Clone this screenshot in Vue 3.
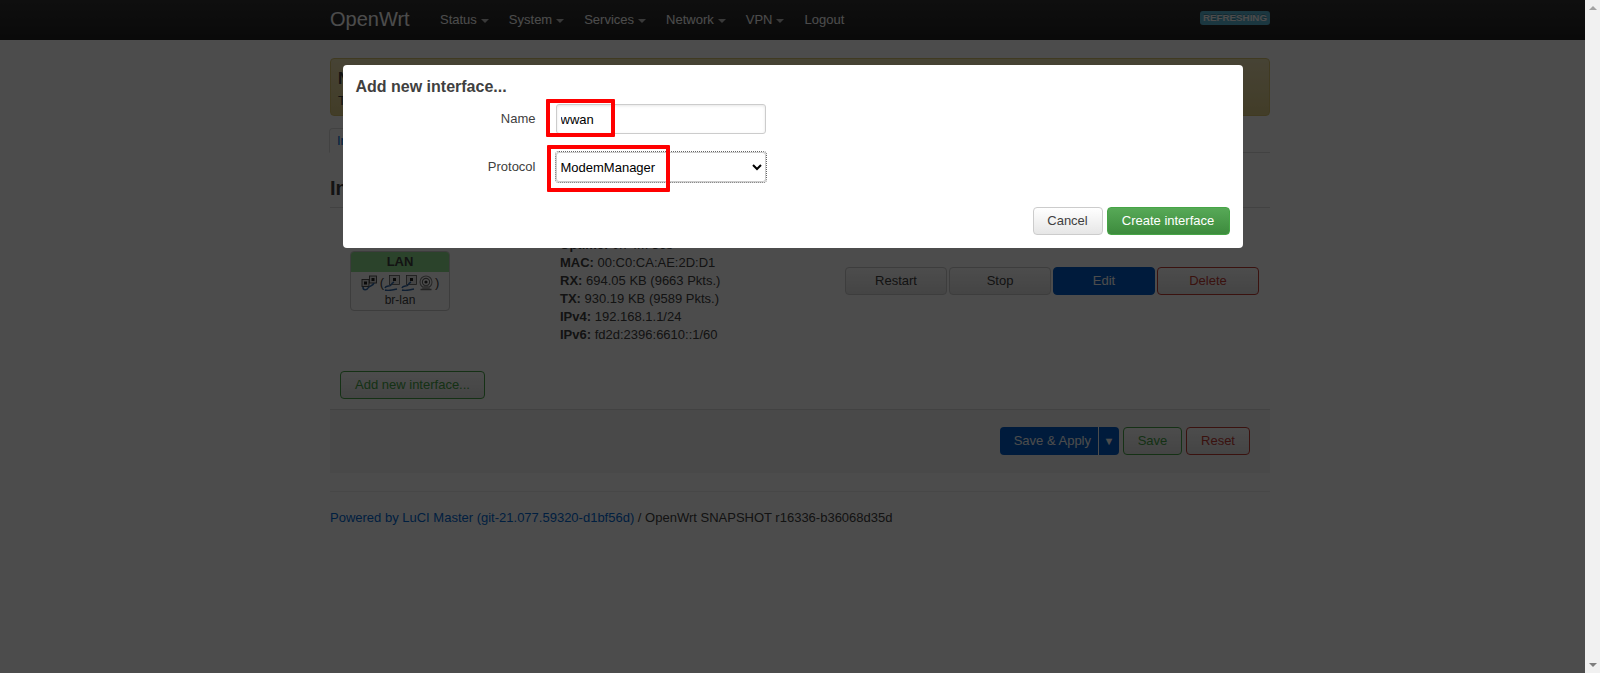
<script setup>
const navItems = [
  { label: 'Status', caret: true },
  { label: 'System', caret: true },
  { label: 'Services', caret: true },
  { label: 'Network', caret: true },
  { label: 'VPN', caret: true },
  { label: 'Logout', caret: false }
]
const stats = [
  { key: 'Uptime:', value: '0h 4m 36s' },
  { key: 'MAC:', value: '00:C0:CA:AE:2D:D1' },
  { key: 'RX:', value: '694.05 KB (9663 Pkts.)' },
  { key: 'TX:', value: '930.19 KB (9589 Pkts.)' },
  { key: 'IPv4:', value: '192.168.1.1/24' },
  { key: 'IPv6:', value: 'fd2d:2396:6610::1/60' }
]
</script>

<template>
  <div class="shell">
    <div class="page">
      <header class="topbar">
        <div class="topbar-inner">
          <a class="brand">OpenWrt</a>
          <nav class="nav">
            <a v-for="item in navItems" :key="item.label" class="nav-link">
              {{ item.label }}<span v-if="item.caret" class="caret"></span>
            </a>
          </nav>
          <span class="badge">REFRESHING</span>
        </div>
      </header>

      <main class="container">
        <div class="alert">
          <strong>No password set!</strong>
          <p>There is no password set on this router.</p>
        </div>

        <ul class="tabs">
          <li class="tab">Interfaces</li>
        </ul>

        <h2 class="title">Interfaces</h2>

        <section class="iface-row">
          <div class="iface-box">
            <div class="iface-head">LAN</div>
            <div class="iface-icons">
              <svg class="ico" viewBox="0 0 16 16">
                <rect x="1" y="4.5" width="7" height="7" fill="#ddd" stroke="#444" stroke-width=".9" />
                <rect x="8.5" y="1" width="7" height="7" fill="#ddd" stroke="#444" stroke-width=".9" />
                <rect x="3" y="6.5" width="3" height="3" fill="#222" />
                <rect x="10.5" y="3" width="3" height="3" fill="#222" />
                <path d="M2 12c0 4 4 3 5 1s5-2 6-5" fill="none" stroke="#2f67a8" stroke-width="1.6" />
              </svg>
              <span class="paren open">(</span>
              <svg v-for="n in 2" :key="n" class="ico port" viewBox="0 0 16 16">
                <rect x="5.5" y="0.5" width="10" height="9" fill="#e4e4e4" stroke="#555" stroke-width=".8" />
                <rect x="9" y="3" width="3" height="3" fill="#222" />
                <path d="M1 13c1-3 5-1 6-3s1-2 3-3M1 15c3 1 8 0 12-1" fill="none" stroke="#2f67a8" stroke-width="1.5" />
              </svg>
              <svg class="ico port" viewBox="0 0 16 16">
                <circle cx="8" cy="7" r="1.6" fill="#333" />
                <circle cx="8" cy="7" r="3.6" fill="none" stroke="#666" stroke-width="1.1" />
                <circle cx="8" cy="7" r="6" fill="none" stroke="#888" stroke-width="1.1" />
                <path d="M6 10.5h4l2 3.5H4z" fill="#aaa" />
                <path d="M2.5 14.5h11" stroke="#777" stroke-width="1.4" />
              </svg>
              <span class="paren">)</span>
            </div>
            <div class="iface-name">br-lan</div>
          </div>

          <div class="iface-stats">
            <div v-for="row in stats" :key="row.key"><strong>{{ row.key }}</strong> {{ row.value }}</div>
          </div>

          <div class="iface-actions">
            <button class="btn wide">Restart</button>
            <button class="btn wide">Stop</button>
            <button class="btn wide primary">Edit</button>
            <button class="btn wide danger">Delete</button>
          </div>
        </section>

        <div class="add-row">
          <button class="btn positive add">Add new interface...</button>
        </div>

        <div class="actions">
          <div class="split">
            <span class="split-main">Save &amp; Apply</span>
            <span class="split-arrow">▼</span>
          </div>
          <button class="btn positive save">Save</button>
          <button class="btn danger reset">Reset</button>
        </div>

        <footer class="footer">
          <a>Powered by LuCI Master (git-21.077.59320-d1bf56d)</a> / OpenWrt SNAPSHOT r16336-b36068d35d
        </footer>
      </main>

      <div class="overlay">
        <div class="modal">
          <h4 class="modal-title">Add new interface...</h4>
          <div class="field field-name">
            <label class="field-label">Name</label>
            <input class="input" value="wwan" />
          </div>
          <div class="field field-proto">
            <label class="field-label">Protocol</label>
            <select class="select">
              <option>ModemManager</option>
            </select>
          </div>
          <div class="modal-foot">
            <button class="btn cancel">Cancel</button>
            <button class="btn create">Create interface</button>
          </div>
          <span class="mark mark-name"></span>
          <span class="mark mark-proto"></span>
        </div>
      </div>
    </div>

    <aside class="scrollbar">
      <span class="arrow up"></span>
      <span class="arrow down"></span>
    </aside>
  </div>
</template>

<style>
html, body { margin: 0; overflow: hidden; }
</style>

<style scoped>
.shell {
  display: flex;
  width: 1600px;
  height: 673px;
  overflow: hidden;
  font-family: "Liberation Sans", Arial, sans-serif;
  font-size: 13px;
  line-height: 18px;
  color: #404040;
  background: #fff;
}
.page { position: relative; width: 1585px; height: 673px; overflow: hidden; flex: none; }
.scrollbar {
  width: 15px;
  flex: none;
  background: #f1f1f1;
  display: flex;
  flex-direction: column;
  justify-content: space-between;
  align-items: center;
  padding: 6px 0;
  box-sizing: border-box;
}
.arrow { width: 0; height: 0; border-left: 4px solid transparent; border-right: 4px solid transparent; }
.arrow.up { border-bottom: 4px solid #a3a3a3; }
.arrow.down { border-top: 4px solid #7f7f7f; }

.topbar {
  height: 40px;
  background: linear-gradient(#333, #222);
  box-sizing: border-box;
}
.topbar-inner { margin-left: 330px; width: 940px; height: 40px; display: flex; align-items: center; }
.brand { font-size: 20px; color: #fff; width: 100px; flex: none; margin-top: -2px; }
.nav { display: flex; flex: 1; margin-left: 10px; }
.nav-link { color: #fff; margin-right: 20px; white-space: nowrap; display: inline-flex; align-items: center; }
.caret {
  display: inline-block;
  margin-left: 4px;
  margin-top: 1px;
  border-left: 4px solid transparent;
  border-right: 4px solid transparent;
  border-top: 4px solid #fff;
  opacity: .7;
}
.badge {
  background: #5cb8d8;
  color: #fff;
  font-size: 9.75px;
  font-weight: 700;
  line-height: 14px;
  height: 14px;
  padding: 0 3px;
  border-radius: 3px;
  margin-top: -4px;
  text-shadow: 0 -1px 0 rgba(0,0,0,.25);
}

.container { margin-left: 330px; width: 940px; }
.alert {
  margin-top: 18px;
  height: 58px;
  box-sizing: border-box;
  background: linear-gradient(#ece0b0, #dccb85);
  border: 1px solid #d8c470;
  border-radius: 4px;
  padding: 11px 7px;
  color: #404040;
}
.alert strong { display: block; font-size: 16px; }
.alert p { margin: 4px 0 0; }
.tabs { list-style: none; margin: 12px 0 0; padding: 0; height: 24px; border-bottom: 1px solid #ddd; display: flex; }
.tab {
  color: #0069d6;
  margin-left: -1px;
  padding: 0 14px 0 7px;
  border: 1px solid #ddd;
  border-bottom: 1px solid #fff;
  border-radius: 4px 4px 0 0;
  line-height: 24px;
  height: 25px;
  box-sizing: border-box;
}
.title { margin: 18px 0 0; font-size: 20px; line-height: 34px; height: 36px; border-bottom: 1px solid #ddd; color: #404040; font-weight: 700; }
.iface-row { display: flex; height: 163px; }
.iface-box {
  margin: 43px 0 0 20px;
  width: 100px;
  height: 60px;
  box-sizing: border-box;
  border: 1px solid #ccc;
  border-radius: 4px;
  text-align: center;
  overflow: hidden;
  font-size: 12px;
  line-height: 16px;
}
.iface-head { background: #90e090; height: 20px; font-size: 13px; font-weight: 700; line-height: 20px; color: #404040; }
.iface-icons { display: flex; justify-content: center; align-items: center; height: 20px; margin-top: 1px; }
.ico { width: 16px; height: 16px; flex: none; }
.ico.port { margin-left: 1px; }
.paren { font-size: 13px; margin-left: 1px; }
.paren.open { margin: 0 -1px 0 3px; }
.iface-name { line-height: 13px; margin-top: 1px; }
.iface-stats { margin: 28px 0 0 110px; width: 285px; }
.iface-actions { display: flex; gap: 2px; margin: 59px 0 0 0; height: 28px; }

.btn {
  box-sizing: border-box;
  height: 28px;
  font: 13px/18px "Liberation Sans", Arial, sans-serif;
  padding: 0 14px;
  border: 1px solid #ccc;
  border-radius: 4px;
  background: linear-gradient(#fff, #e6e6e6);
  color: #404040;
  cursor: pointer;
}
.btn.wide { width: 102px; padding: 0; }
.btn.primary { background: #005cc8; border-color: #005cc8; color: #fff; }
.btn.danger { background: linear-gradient(#fff, #e6e6e6); border-color: #c43c35; color: #c43c35; }
.btn.positive { background: linear-gradient(#fff, #e6e6e6); border-color: #46a546; color: #46a546; }
.add-row { padding: 0 0 11px 10px; height: 38px; box-sizing: border-box; }
.add { width: 145px; padding: 0; }
.actions {
  border-top: 1px solid #ddd;
  background: #f5f5f5;
  height: 64px;
  box-sizing: border-box;
  padding: 17px 20px 0 0;
  display: flex;
  justify-content: flex-end;
  gap: 4px;
}
.split {
  display: flex;
  width: 119px;
  height: 28px;
  border-radius: 4px;
  background: #005cc8;
  color: #fff;
  overflow: hidden;
  line-height: 28px;
}
.split-main { width: 99px; text-align: right; padding-right: 7px; box-sizing: border-box; border-right: 1px solid #fff; }
.split-arrow { flex: 1; text-align: center; font-size: 11px; }
.save { width: 59px; padding: 0; }
.reset { width: 64px; padding: 0; }
.footer { margin-top: 18px; border-top: 1px solid #eee; padding-top: 17px; color: #404040; }
.footer a { color: #0069d6; }

.overlay {
  position: absolute;
  inset: 0;
  background: rgba(0,0,0,.7);
}
.modal {
  position: relative;
  width: 900px;
  height: 183px;
  margin: 65px auto 0;
  background: #fff;
  border-radius: 4px;
  box-sizing: border-box;
  padding: 14px 13px 13px;
}
.modal-title { margin: 0; font-size: 16px; line-height: 16px; font-weight: 700; color: #404040; }
.field { display: flex; align-items: center; }
.field-name { margin-top: 9px; height: 30px; }
.field-proto { margin-top: 18px; height: 30px; }
.field-label { width: 180px; text-align: right; margin-right: 20px; flex: none; margin-top: -1px; }
.input {
  width: 210px;
  height: 30px;
  box-sizing: border-box;
  border: 1px solid #ccc;
  border-radius: 3px;
  padding: 4px;
  font: 13px "Liberation Sans", Arial, sans-serif;
  color: #000;
  outline: none;
  box-shadow: inset 0 1px 3px rgba(0,0,0,.1);
}
.select {
  width: 210px;
  height: 30px;
  box-sizing: border-box;
  border: 1px solid #ccc;
  border-radius: 3px;
  padding: 0;
  font: 13px "Liberation Sans", Arial, sans-serif;
  color: #000;
  background: #fff;
  outline: 1px dotted #666;
}
.modal-foot { display: flex; justify-content: flex-end; gap: 4px; margin-top: 25px; }
.cancel { width: 70px; padding: 0; }
.create { width: 123px; padding: 0; background: linear-gradient(#57a957, #3d8b3d); border-color: #46a546; color: #fff; }
.mark { position: absolute; border: 4px solid #f00; box-sizing: border-box; border-radius: 1px; }
.mark-name { left: 203px; top: 34px; width: 69px; height: 38px; }
.mark-proto { left: 204px; top: 80px; width: 123px; height: 47px; }
</style>
